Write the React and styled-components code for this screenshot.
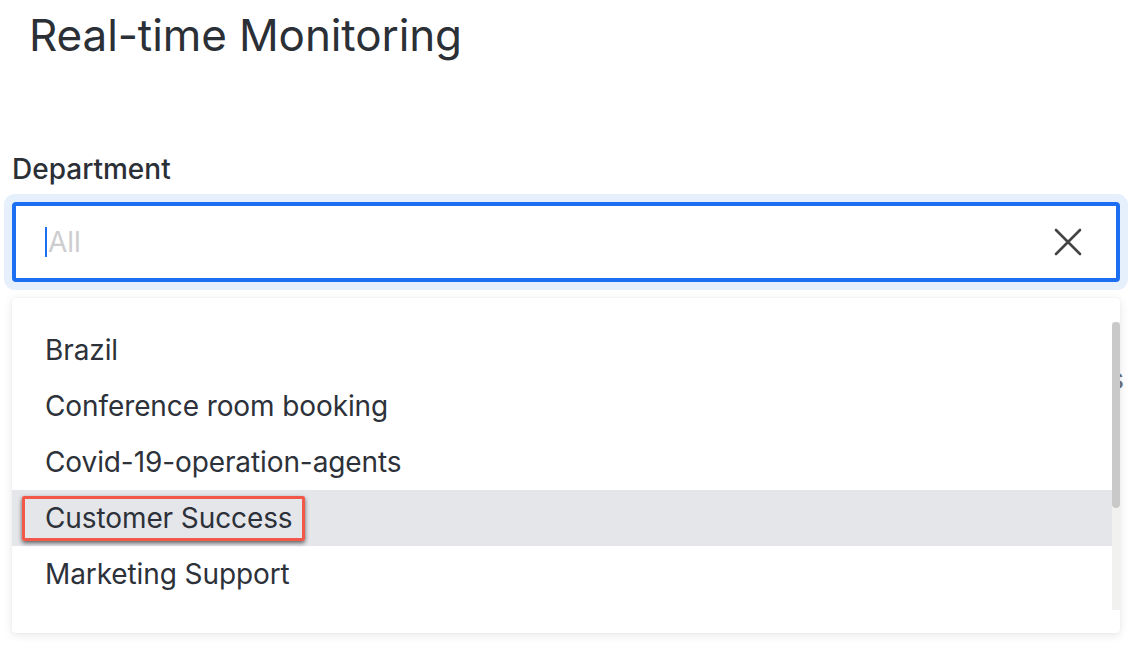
import React from 'react';
import styled, { createGlobalStyle } from 'styled-components';

const GlobalStyle = createGlobalStyle`
  html, body {
    margin: 0;
    padding: 0;
    background: #fff;
  }
  body {
    font-family: Inter, "Noto Sans", "Liberation Sans", sans-serif;
    color: #2b2f36;
  }
`;

const Page = styled.div`
  padding: 0 12px;
  width: 1132px;
  height: 656px;
  box-sizing: border-box;
  overflow: hidden;
`;

const Title = styled.h1`
  margin: 0 0 0 17px;
  padding-top: 10px;
  font-size: 44px;
  line-height: 50px;
  font-weight: 400;
  letter-spacing: -0.1px;
  color: #2b2f36;
`;

const Field = styled.div`
  margin-top: 92px;
  width: 1108px;
`;

const Label = styled.label`
  display: block;
  font-size: 28px;
  font-weight: 500;
  line-height: 34px;
  color: #2b2f36;
  margin-bottom: 16px;
`;

const Select = styled.div`
  position: relative;
`;

const InputBox = styled.div`
  display: flex;
  align-items: center;
  height: 80px;
  box-sizing: border-box;
  border: 4px solid #1c6ef2;
  border-radius: 4px;
  box-shadow: 0 0 0 8px #e6effc;
  padding: 0 34px 0 29px;
`;

const Caret = styled.span`
  width: 2px;
  height: 30px;
  background: #1c6ef2;
`;

const Placeholder = styled.span`
  flex: 1;
  font-size: 28px;
  color: #cdcdd0;
  margin-left: 1px;
`;

const ClearButton = styled.button`
  display: flex;
  border: 0;
  background: none;
  padding: 0;
  cursor: pointer;
`;

const BehindRow = styled.div`
  display: flex;
  justify-content: flex-end;
  margin-top: 80px;
  margin-right: -4px;
  font-size: 28px;
  line-height: 34px;
  color: #6b7280;
`;

const Menu = styled.div`
  position: absolute;
  top: calc(100% + 16px);
  left: 0;
  width: 1108px;
  height: 335px;
  box-sizing: border-box;
  display: flex;
  background: #fff;
  border-radius: 4px;
  box-shadow: 0 2px 10px rgba(0, 0, 0, 0.1), 0 0 2px rgba(0, 0, 0, 0.06);
  padding: 24px 0 23px;
  z-index: 2;
`;

const List = styled.ul`
  flex: 1;
  list-style: none;
  margin: 0;
  padding: 0;
`;

const Item = styled.li`
  position: relative;
  display: flex;
  align-items: center;
  height: 56px;
  padding-left: 33px;
  font-size: 28px;
  letter-spacing: -0.1px;
  color: #2d3139;
  background: ${p => (p.$active ? '#e5e6ea' : 'transparent')};
`;

const Marker = styled.span`
  position: absolute;
  left: 10px;
  top: 6px;
  width: 283px;
  height: 45px;
  box-sizing: border-box;
  border: 3px solid #f2584a;
  border-radius: 2px;
  box-shadow: 0 2px 4px rgba(0, 0, 0, 0.6);
`;

const Track = styled.div`
  width: 8px;
  background: #f1f1f0;
`;

const Thumb = styled.div`
  height: 186px;
  border-radius: 4px;
  background: #c9c9c9;
`;

const departments = [
  'Brazil',
  'Conference room booking',
  'Covid-19-operation-agents',
  'Customer Success',
  'Marketing Support',
];

const App = () => (
  <>
    <GlobalStyle />
    <Page>
      <Title>Real-time Monitoring</Title>
      <Field>
        <Label>Department</Label>
        <Select>
          <InputBox>
            <Caret />
            <Placeholder>All</Placeholder>
            <ClearButton type='button' aria-label='Clear'>
              <svg width='28' height='28' viewBox='0 0 28 28'>
                <path d='M2 2 L26 26 M26 2 L2 26' stroke='#444' strokeWidth='2.6' strokeLinecap='round' />
              </svg>
            </ClearButton>
          </InputBox>
          <Menu>
            <List>
              {departments.map((name, i) => (
                <Item key={name} $active={i === 3}>
                  {i === 3 && <Marker />}
                  {name}
                </Item>
              ))}
            </List>
            <Track>
              <Thumb />
            </Track>
          </Menu>
        </Select>
        <BehindRow>Agents</BehindRow>
      </Field>
    </Page>
  </>
);

export default App;
